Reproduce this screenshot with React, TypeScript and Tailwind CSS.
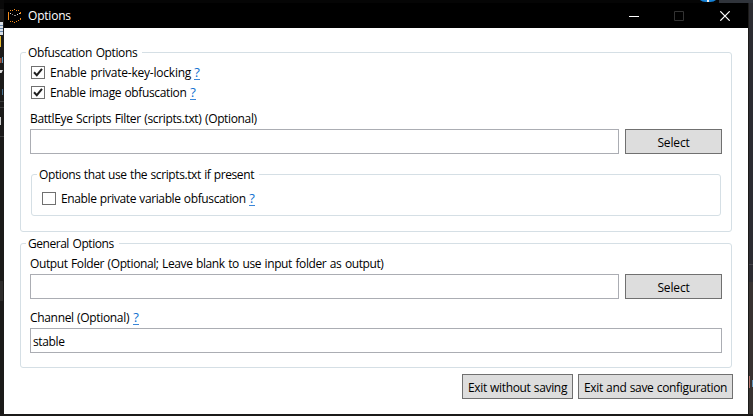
import type { ReactNode } from "react";

function Group({ title, titleClass, className, children }: { title: string; titleClass: string; className: string; children: ReactNode }) {
  return (
    <section className={`relative rounded-[3px] border border-[#d5dfe5] ${className}`}>
      <h2 className={`absolute -top-[9px] h-[18px] whitespace-nowrap bg-white leading-[18px] ${titleClass}`}>{title}</h2>
      {children}
    </section>
  );
}

function Help() {
  return (
    <a href="#" className="ml-[4px] block h-[14px] w-[6px] shrink-0 border-b border-[#3a86d8] text-center text-[13px] leading-[12px] text-[#0f6fd0]">
      ?
    </a>
  );
}

function Check({ label, checked, labelClass }: { label: string; checked?: boolean; labelClass: string }) {
  return (
    <div className="flex h-[20px] items-start">
      <span className="block h-[13px] w-[14px] shrink-0 border border-[#707070] bg-white">
        {checked && (
          <svg viewBox="0 0 12 11" className="block h-[11px] w-[12px]" fill="none" stroke="#212121" strokeWidth="2">
            <path d="M2 5.2 L4.8 8.2 L10 1.8" />
          </svg>
        )}
      </span>
      <span className={`-mt-[2px] ml-[5px] shrink-0 whitespace-nowrap leading-[18px] ${labelClass}`}>{label}</span>
      <Help />
    </div>
  );
}

function Button({ children, className }: { children: string; className: string }) {
  return (
    <button className={`flex h-[25px] shrink-0 items-center justify-center whitespace-nowrap border border-[#707070] bg-[#dddddd] pt-[2px] ${className}`}>
      {children}
    </button>
  );
}

function FileRow() {
  return (
    <div className="flex gap-[6px]">
      <input className="h-[25px] w-[589px] border border-[#abadb3] bg-white px-[3px] outline-none" />
      <Button className="w-[97px] tracking-[-0.15px]">Select</Button>
    </div>
  );
}

function TitleBar() {
  return (
    <header className="flex h-[25px] items-center bg-black text-white">
      <svg viewBox="0 0 14 14" className="ml-[4px] h-[14px] w-[14px]" shapeRendering="crispEdges">
        <path d="M0 3h1v8H0zM2 1h1v1H2zM4 1h1v1H4zM6 0h1v1H6zM8 1h1v1H8zM10 1h1v1H10zM12 3h1v2H12zM12 9h1v2H12zM10 11h1v1H10zM8 12h1v1H8zM6 13h1v1H6zM4 12h1v1H4zM2 12h1v1H2z" fill="#f08a1c" />
        <path d="M2 4h1v1H2zM11 4h1v1H11zM9 5h1v1H9z" fill="#e6e0d8" />
        <path d="M4 5h1v1H4zM6 6h2v1H6z" fill="#8b8b8b" />
      </svg>
      <span className="ml-[6px] tracking-[-0.2px]">Options</span>
      <svg viewBox="0 0 101 10" className="ml-auto mr-[18px] h-[10px] w-[101px]" fill="none">
        <path d="M0 5.5 H10" stroke="#fff" />
        <path d="M45.5 .5 H54.5 V9.5 H45.5 Z" stroke="#333" />
        <path d="M91.3 .3 L100.7 9.7 M100.7 .3 L91.3 9.7" stroke="#fff" strokeWidth="1.2" />
      </svg>
    </header>
  );
}

function Backdrop() {
  return (
    <svg viewBox="0 0 753 416" className="absolute inset-0 h-full w-full">
      <path d="M0 0 H753 V416 H0 Z" fill="#1b1a19" />
      <path d="M0 0 H719 V3 H0 Z" fill="#050505" />
      <path d="M719 0 H753 V3 H719 Z" fill="#30343b" />
      <path d="M749 3 H753 V282 H749 Z" fill="#2c2c31" />
      <path d="M749 282 H753 V416 H749 Z" fill="#383331" />
      <path d="M0 414 H753 V416 H0 Z" fill="#1b1a19" />
      <path d="M749 264.5 H753" stroke="#454348" />
      <path d="M0 0 H4 V9 H0 Z" fill="#090909" />
      <path d="M0 22 H3 V35 H0 Z" fill="#d9e0e8" />
      <path d="M0 25.5 H3 M0 28.5 H3 M0 31.5 H3" stroke="#6886aa" />
      <path d="M0 36 H1 V47 H0 Z" fill="#e5b82d" />
      <path d="M0 58 H1.5 V63 H0 Z" fill="#a2533c" />
      <path d="M2 57 H3 V63 H2 Z" fill="#5291b6" />
      <path d="M0 70 H3 L1.5 73 H0 Z" fill="#ddd" />
      <path d="M2 89 H3 V95 H2 Z" fill="#47708d" />
      <path d="M0 101.5 H4 M0 107.5 H4 M0 136.5 H4" stroke="#3a3a3a" />
      <path d="M0 117 H1 V125 H0 Z" fill="#ccc" />
      <path d="M0 281 H3 V301 H0 Z" fill="#2d2c2b" />
      <path d="M700 0 H716 Q714 2 710 2 H706 Q702 2 700 0" fill="#1683d8" />
      <path d="M707 0 H709 V2 H707 Z" fill="#eee" />
      <path d="M749 376 H750 V388 H749 Z" fill="#b4756e" />
      <path d="M752 380 H753 V387 H752 Z" fill="#6294b8" />
    </svg>
  );
}

export default function App() {
  return (
    <div className="relative h-[416px] w-[753px] overflow-hidden pl-[4px] pt-[3px] font-['Open_Sans','Noto_Sans',sans-serif] text-[12px] leading-[18px] text-black">
      <Backdrop />
      <div className="relative h-[411px] w-[744px] bg-white">
        <TitleBar />
        <main className="px-[16px] pt-[24px]">
          <Group title="Obfuscation Options" titleClass="left-[5px] w-[116px] pl-[2px] tracking-[-0.38px] [word-spacing:1px]" className="h-[180px] px-[9px] pt-[13px]">
            <div className="pl-[1px]">
              <Check checked label="Enable private-key-locking" labelClass="w-[140px] tracking-[-0.22px] [word-spacing:1px]" />
              <Check checked label="Enable image obfuscation" labelClass="w-[136px] tracking-[-0.36px] [word-spacing:0.5px]" />
            </div>
            <p className="mb-[1px] mt-[4px] h-[18px] tracking-[-0.36px] [word-spacing:0.8px]">BattlEye Scripts Filter (scripts.txt) (Optional)</p>
            <FileRow />
            <Group title="Options that use the scripts.txt if present" titleClass="left-[5px] w-[222px] pl-[2px] tracking-[-0.4px] [word-spacing:0.6px]" className="ml-[1px] mt-[20px] h-[42px] w-[690px] pl-[10px] pt-[17px]">
              <Check label="Enable private variable obfuscation" labelClass="w-[184px] tracking-[-0.38px] [word-spacing:0.5px]" />
            </Group>
          </Group>
          <Group title="General Options" titleClass="left-[5px] w-[93px] pl-[2px] tracking-[-0.46px] [word-spacing:1px]" className="mt-[11px] h-[125px] px-[9px] pt-[11px]">
            <p className="mb-[1px] h-[18px] tracking-[-0.4px] [word-spacing:0.8px]">Output Folder (Optional; Leave blank to use input folder as output)</p>
            <FileRow />
            <div className="mt-[10px] flex h-[19px] items-start">
              <span className="w-[99px] whitespace-nowrap tracking-[-0.33px] [word-spacing:0.5px]">Channel (Optional)</span>
              <div className="pt-[2px]">
                <Help />
              </div>
            </div>
            <input defaultValue="stable" className="block h-[25px] w-[692px] border border-[#abadb3] bg-white px-[2px] pt-[1px] tracking-[-0.35px] outline-none" />
          </Group>
          <footer className="-mr-[1px] mt-[6px] flex justify-end gap-[5px]">
            <Button className="w-[111px] tracking-[-0.34px] [word-spacing:0.5px]">Exit without saving</Button>
            <Button className="w-[155px] tracking-[-0.34px] [word-spacing:0.5px]">Exit and save configuration</Button>
          </footer>
        </main>
      </div>
    </div>
  );
}
